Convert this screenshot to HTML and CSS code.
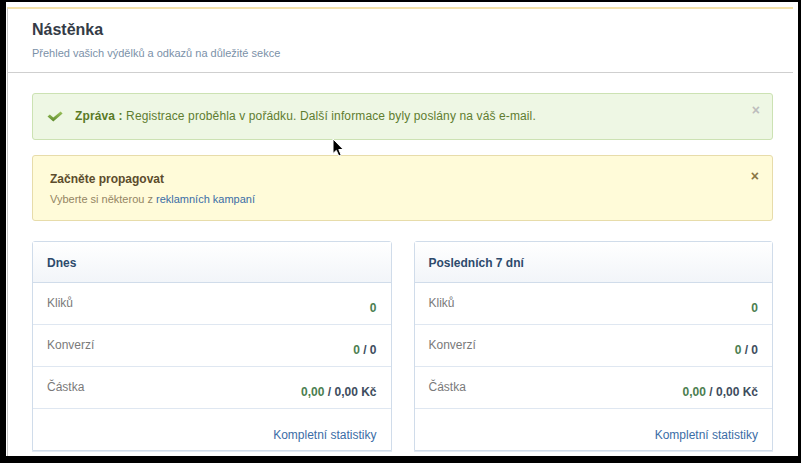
FILE: index.html
```html
<!DOCTYPE html>
<html lang="cs">
<head>
<meta charset="utf-8">
<title>Nástěnka</title>
<link rel="stylesheet" href="styles.css">
</head>
<body>
<div class="window">
  <div class="page">
    <header class="page-head">
      <h1>Nástěnka</h1>
      <p>Přehled vašich výdělků a odkazů na důležité sekce</p>
    </header>
    <main class="content">
      <div class="alert alert-success">
        <svg class="check" width="16" height="11" viewBox="0 0 16 11">
          <defs>
            <linearGradient id="cg" x1="0" y1="0" x2="0" y2="1">
              <stop offset="0" stop-color="#9cc25c"/>
              <stop offset="1" stop-color="#5d8a2c"/>
            </linearGradient>
          </defs>
          <path d="M0.5 5.5 L2.8 3.4 L6.3 6.4 L13.6 0.4 L15.6 2.4 L6.3 10.6 Z" fill="url(#cg)"/>
        </svg>
        <p><strong>Zpráva :</strong> Registrace proběhla v pořádku. Další informace byly poslány na váš e-mail.</p>
        <span class="close close-light">×</span>
      </div>
      <div class="alert alert-warning">
        <h2>Začněte propagovat</h2>
        <p>Vyberte si některou z <a href="#">reklamních kampaní</a></p>
        <span class="close close-dark">×</span>
      </div>
      <div class="stats">
        <section class="box">
          <h3 class="box-head">Dnes</h3>
          <div class="row"><span class="label">Kliků</span><span class="value"><em>0</em></span></div>
          <div class="row"><span class="label">Konverzí</span><span class="value"><em>0</em> / 0</span></div>
          <div class="row"><span class="label">Částka</span><span class="value"><em>0,00</em> / 0,00 Kč</span></div>
          <div class="box-foot"><a href="#">Kompletní statistiky</a></div>
        </section>
        <section class="box">
          <h3 class="box-head">Posledních 7 dní</h3>
          <div class="row"><span class="label">Kliků</span><span class="value"><em>0</em></span></div>
          <div class="row"><span class="label">Konverzí</span><span class="value"><em>0</em> / 0</span></div>
          <div class="row"><span class="label">Částka</span><span class="value"><em>0,00</em> / 0,00 Kč</span></div>
          <div class="box-foot"><a href="#">Kompletní statistiky</a></div>
        </section>
      </div>
    </main>
  </div>
</div>
<svg class="cursor" width="13" height="19" viewBox="0 0 13 19">
  <path d="M1 1 L1 15.5 L4.3 12.4 L6.8 18 L9.2 17 L6.8 11.5 L11.3 11.5 Z" fill="#000" stroke="#fff" stroke-width="1" stroke-linejoin="round"/>
</svg>
</body>
</html>
```
FILE: styles.css
```css
* { box-sizing: border-box; }
html, body { margin: 0; padding: 0; }
body {
  background: #000;
  height: 463px;
  overflow: hidden;
  position: relative;
  font-family: "Liberation Sans", Arial, Helvetica, sans-serif;
  font-size: 12px;
  line-height: 16px;
  color: #555;
}
.window {
  margin: 2px 3px 0 6px;
  height: 454px;
  background: #fff;
  padding: 5px 5px 0 1px;
  overflow: hidden;
}
.page {
  height: 100%;
  border-left: 1px solid #c9c9c9;
  border-top: 2px solid #f3e1aa;
}
.page-head {
  padding: 11px 24px 12px;
  border-bottom: 1px solid #cfcfcf;
}
.page-head h1 {
  margin: 0;
  font-size: 16px;
  line-height: 20px;
  font-weight: bold;
  color: #343b46;
}
.page-head p {
  margin: 6px 0 0;
  font-size: 11px;
  line-height: 14px;
  color: #7b91a8;
}
.content {
  padding: 20px 20px 0 24px;
}
.alert {
  position: relative;
  border: 1px solid;
  border-radius: 3px;
}
.alert p { margin: 0; }
.alert-success {
  display: flex;
  align-items: center;
  gap: 12px;
  padding: 14px 40px 15px 14px;
  background: #eef7e4;
  border-color: #cce2b3;
  color: #5f7d30;
  letter-spacing: 0.12px;
}
.alert-success .check { flex: none; margin-top: 1px; }
.alert-success strong { color: #5a7a26; }
.alert-warning {
  margin-top: 15px;
  padding: 15px 40px 13px 17px;
  background: #fffbd9;
  border-color: #e7dcaa;
}
.alert-warning h2 {
  margin: 0 0 4px;
  font-size: 12px;
  line-height: 16px;
  font-weight: bold;
  color: #5c4c2c;
}
.alert-warning p {
  font-size: 11px;
  color: #948563;
}
a { color: #3b6da6; text-decoration: none; }
.close {
  position: absolute;
  font-size: 14px;
  line-height: 14px;
  font-weight: bold;
  letter-spacing: 0;
}
.close-light { top: 9px; right: 12px; color: #bdbdbd; }
.close-dark { top: 13px; right: 13px; color: #8a7646; }
.stats {
  margin-top: 20px;
  display: grid;
  grid-template-columns: 1fr 1fr;
  gap: 22px;
}
.box {
  border: 1px solid #d0dcea;
  border-radius: 3px 3px 0 0;
  box-shadow: 0 1px 0 #e3eaf3;
}
.box-head {
  margin: 0;
  padding: 13px 14px 11px;
  font-size: 12px;
  line-height: 16px;
  font-weight: bold;
  color: #2d4a6c;
  background: linear-gradient(#ffffff, #f2f5f9);
  border-bottom: 1px solid #d0dcea;
}
.row {
  display: flex;
  justify-content: space-between;
  align-items: flex-start;
  height: 42px;
  padding: 12px 14px 0;
  border-bottom: 1px solid #dfe7f1;
}
.label { color: #7a7a7a; }
.value {
  margin-top: 5px;
  font-weight: bold;
  color: #3e4d5e;
}
.value em { font-style: normal; color: #4b7e50; }
.box-foot {
  padding: 18px 14px 7px;
  text-align: right;
}
.cursor {
  position: absolute;
  left: 332px;
  top: 138px;
}
```
